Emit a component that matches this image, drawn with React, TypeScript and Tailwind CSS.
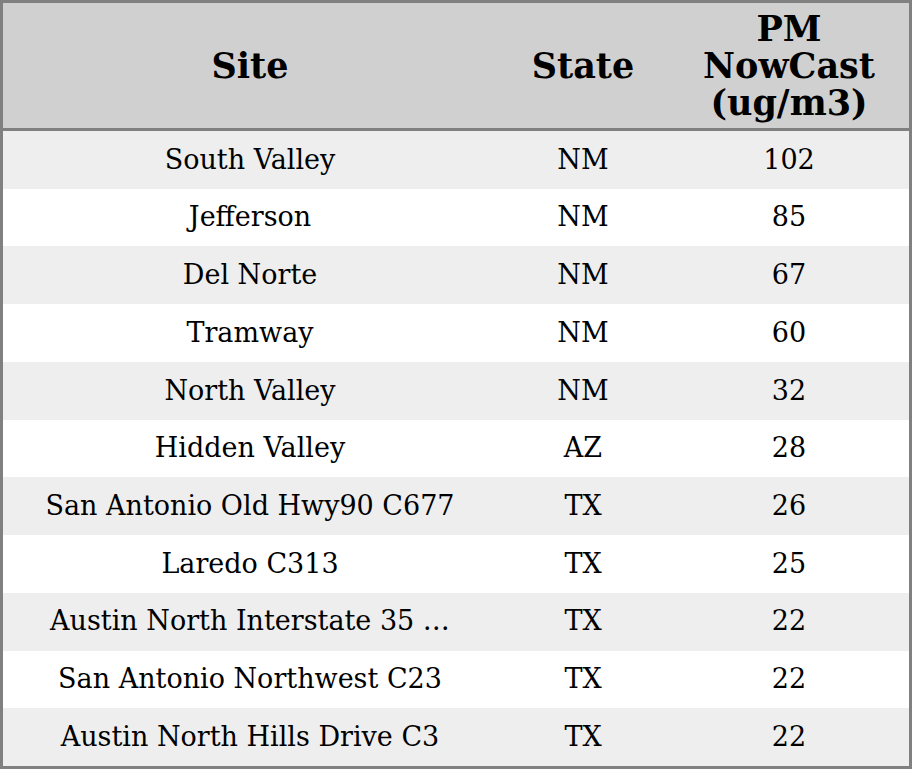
const rows: [string, string, number][] = [
  ["South Valley", "NM", 102],
  ["Jefferson", "NM", 85],
  ["Del Norte", "NM", 67],
  ["Tramway", "NM", 60],
  ["North Valley", "NM", 32],
  ["Hidden Valley", "AZ", 28],
  ["San Antonio Old Hwy90 C677", "TX", 26],
  ["Laredo C313", "TX", 25],
  ["Austin North Interstate 35 …", "TX", 22],
  ["San Antonio Northwest C23", "TX", 22],
  ["Austin North Hills Drive C3", "TX", 22],
];

export default function App() {
  return (
    <div className="w-[912px] h-[769px] bg-white border-[3px] border-[#808080] text-black font-['DejaVu_Serif',serif] flex flex-col">
      {/* header */}
      <div className="h-[128px] shrink-0 bg-[#d0d0d0] border-b-[3px] border-[#808080] flex items-center text-[35px] font-bold leading-[37px] text-center">
        <div className="w-[494px]">Site</div>
        <div className="w-[172px]">State</div>
        <div className="flex-1">
          PM
          <br />
          NowCast
          <br />
          (ug/m3)
        </div>
      </div>
      {rows.map(([site, state, value], i) => (
        <div
          key={site}
          className={`flex-1 flex items-center text-center text-[27px] ${i % 2 === 0 ? "bg-[#eeeeee]" : "bg-white"}`}
        >
          <div className="w-[494px]">{site}</div>
          <div className="w-[172px]">{state}</div>
          <div className="flex-1">{value}</div>
        </div>
      ))}
    </div>
  );
}
